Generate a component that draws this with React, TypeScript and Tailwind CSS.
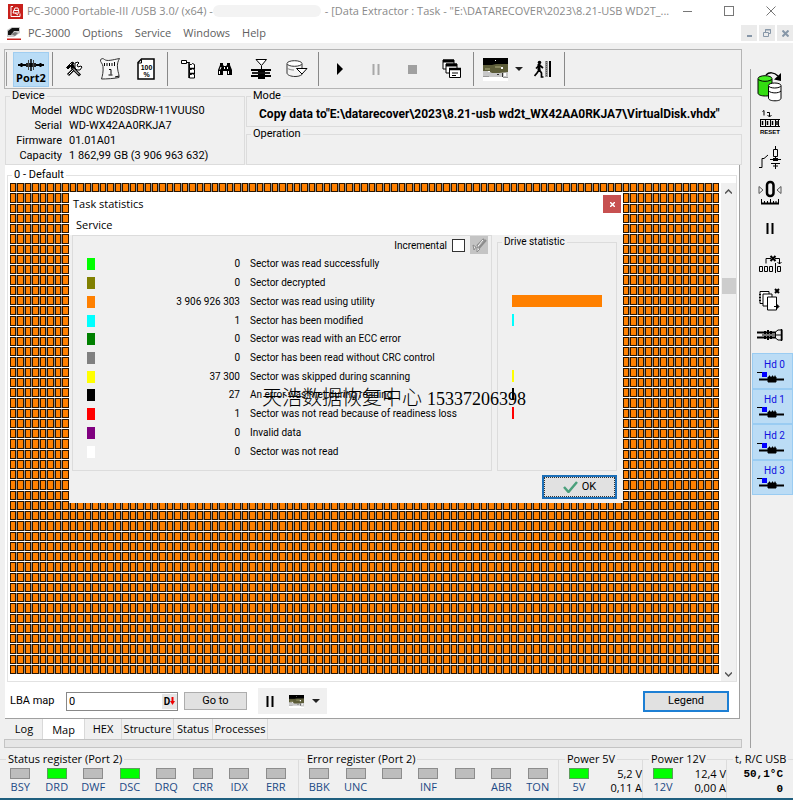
import { useState } from 'react';
import type { ReactNode } from 'react';
import clsx from 'clsx';

const UI = 'font-["Roboto","Liberation_Sans",sans-serif]';
const SEGOE = 'font-["Open_Sans","Noto_Sans",sans-serif]';

const MAP_ROWS = 48;
const MAP_COLS = 95;

interface Stat {
  color: string;
  count: string;
  label: string;
  bar: string;
}

const stats: Stat[] = [
  { color: 'bg-[#00ff00]', count: '0', label: 'Sector was read successfully', bar: 'w-0' },
  { color: 'bg-[#808000]', count: '0', label: 'Sector decrypted', bar: 'w-0' },
  { color: 'bg-[#ff8000]', count: '3 906 926 303', label: 'Sector was read using utility', bar: 'w-[90px]' },
  { color: 'bg-[#00ffff]', count: '1', label: 'Sector has been modified', bar: 'w-0.5' },
  { color: 'bg-[#008000]', count: '0', label: 'Sector was read with an ECC error', bar: 'w-0' },
  { color: 'bg-[#808080]', count: '0', label: 'Sector has been read without CRC control', bar: 'w-0' },
  { color: 'bg-[#ffff00]', count: '37 300', label: 'Sector was skipped during scanning', bar: 'w-0.5' },
  { color: 'bg-[#000000]', count: '27', label: 'An error was met during reading', bar: 'w-0.5' },
  { color: 'bg-[#ff0000]', count: '1', label: 'Sector was not read because of readiness loss', bar: 'w-0.5' },
  { color: 'bg-[#800080]', count: '0', label: 'Invalid data', bar: 'w-0' },
  { color: 'bg-[#ffffff]', count: '0', label: 'Sector was not read', bar: 'w-0' },
];

const device = [
  ['Model', 'WDC WD20SDRW-11VUUS0'],
  ['Serial', 'WD-WX42AA0RKJA7'],
  ['Firmware', '01.01A01'],
  ['Capacity', '1 862,99 GB (3 906 963 632)'],
];

const statusBits = ['BSY', 'DRD', 'DWF', 'DSC', 'DRQ', 'CRR', 'IDX', 'ERR'];
const errorBits = ['BBK', 'UNC', '', 'INF', '', 'ABR', 'TON'];
const tabs = [
  { name: 'Log', width: 'w-[37px]' },
  { name: 'Map', width: 'w-[42px]' },
  { name: 'HEX', width: 'w-[37px]' },
  { name: 'Structure', width: 'w-[52px]' },
  { name: 'Status', width: 'w-[39px]' },
  { name: 'Processes', width: 'w-[55px]' },
];

function Svg({ w = 28, h = 28, children }: { w?: number; h?: number; children: ReactNode }) {
  return (
    <svg width={w} height={h} viewBox={`0 0 ${w} ${h}`} fill="none" stroke="#000" strokeWidth="1" className="shrink-0">
      {children}
    </svg>
  );
}

/* ---------- toolbar icons ---------- */

function PortIcon() {
  return (
    <Svg w={28} h={12}>
      <path d="M1 6h26" strokeWidth="2" />
      <path d="M4.500 4v4M23.500 4v4" strokeWidth="2" />
      <path d="M9 4h10v4H9z" fill="#222" stroke="none" />
      <path d="M11.500 1v10M16.500 1v10" stroke="#444" />
      <path d="M14 0v12" strokeWidth="1.500" />
    </Svg>
  );
}

function ToolsIcon() {
  return (
    <Svg w={18} h={18}>
      <path d="M3 15L11 7" strokeWidth="3" />
      <path d="M3.500 14.500L10.500 7.500" stroke="#fff" />
      <path d="M10 3l3-1 1 1-2 2 1 2 3-1 1 1-2 3-3 0-2-2z" fill="#fff" />
      <path d="M6.500 7l8.500 8.500" strokeWidth="3" />
      <path d="M8 8.500l6 6" stroke="#fff" />
      <path d="M1.500 7.500L7 2l2 1-1 1.500 1 1.500-2 2-1.500-1.500L3 9z" fill="#000" />
      <path d="M5 5l1.500-1.500" stroke="#fff" />
    </Svg>
  );
}

function ScriptIcon() {
  return (
    <Svg w={22} h={24}>
      <path d="M1.500 3C2 1.500 4 1 5.500 2.500 8 4.500 13 3 20.500 1.500 19 4 18 7 18.500 11c.5 5 2 7 1.500 9.500C16 21.500 7 22 2.500 22 3.500 19 4.500 14 4 9.500 3.500 6 1 5 1.500 3z" fill="#f6f6f6" stroke="#333" />
      <path d="M5.500 6v3M8 6v3M10.500 6v3M13 6v3M15.500 5v4M10 12.500h2v5M9.500 18h4" />
      <path d="M16 20l4-1" />
    </Svg>
  );
}

function PercentDocIcon() {
  return (
    <Svg w={18} h={22}>
      <path d="M4.500 1H17V21H1V4.500z" fill="#fff" strokeWidth="1.500" />
      <path d="M4.500 1.500V5H1" />
      <g fill="#000" stroke="none" fontFamily="Liberation Sans" fontWeight="700" textAnchor="middle">
        <text x="9.500" y="11.500" fontSize="7">100</text>
        <text x="9.500" y="18.500" fontSize="7">%</text>
      </g>
    </Svg>
  );
}

function TreeIcon() {
  return (
    <Svg w={18} h={20}>
      <path d="M1.500 1.500h5v3h-5z" fill="#fff" />
      <path d="M6.500 3.500h3" />
      <path d="M9.500 5.500h2l1-1 2 1v4h-5zM9.500 10.500h2l1-1 2 1v4h-5zM9.500 15.500h2l1-1 2 1v3.500h-5z" fill="#fff" />
      <path d="M9 3v16" strokeWidth="1.500" />
      <path d="M10 9.500h5M10 14.500h5" strokeWidth="1.500" />
    </Svg>
  );
}

function BinocularsIcon() {
  return (
    <Svg w={16} h={14}>
      <path d="M3 1h3v2l1 1h2l1-1V1h3v2l2 5v5h-5V9H6v4H1V8l2-5z" fill="#000" stroke="none" />
      <path d="M2.500 9v3M4 5L3 7.500M10.500 5v2M11.500 9v3" stroke="#fff" />
      <path d="M7.500 5v2" stroke="#fff" />
    </Svg>
  );
}

function LayersIcon() {
  return (
    <Svg w={22} h={20}>
      <path d="M6 .5h10.500L11.500 6.500z" fill="#fff" />
      <path d="M11.500 7v12" />
      <path d="M1 11h20M1 17h20" strokeWidth="2" />
      <path d="M2 14h18" strokeWidth="2" stroke="#222" />
      <path d="M8 12.500h7M8 15.500h7M8 19h7" strokeWidth="2" />
    </Svg>
  );
}

function DiskIcon() {
  return (
    <Svg w={22} h={18}>
      <path d="M1 4v9c0 2 4 3.500 8 3.500 3 0 5-.5 7-2V4" fill="#f4f4f4" stroke="#333" />
      <ellipse cx="8.500" cy="3.500" rx="7.500" ry="2.800" fill="#fff" stroke="#333" />
      <path d="M1 8c2 1.500 4 2 7 2" stroke="#888" />
      <path d="M10.500 8.500h10.500L16 14z" fill="#fff" />
    </Svg>
  );
}

function WindowsIcon() {
  return (
    <Svg w={20} h={20}>
      <path d="M1 1h11v9H1z" fill="#fff" />
      <path d="M1 2h11" strokeWidth="3" />
      <path d="M4 5h11v9H4z" fill="#fff" />
      <path d="M4 6h11" strokeWidth="3" />
      <path d="M7.500 9.500h11v9h-11z" fill="#fff" />
      <path d="M7 10h12" strokeWidth="2.500" />
      <path d="M10 14h6M10 16.500h4" />
    </Svg>
  );
}

function PhotoIcon({ w, h }: { w: number; h: number }) {
  return (
    <svg width={w} height={h} viewBox="0 0 25 23" preserveAspectRatio="none" className="shrink-0">
      <path fill="#fff" d="M0 0h25v23H0z" />
      <path fill="#c8c8c8" d="M0 12h25v7H0z" />
      <path fill="#000" d="M0 0h25v7H0z" />
      <path fill="#5c5c38" d="M0 7h9l4-1h12v8l-9 1-7 0-4-2H0z" />
      <path fill="#85855c" d="M12 8h6v2h-6zM2 10h5v2H2z" />
      <path fill="#fff" d="M12 2h1v1h-1zM18 9h2v2h-2zM5 13h2v1H5zM21 15h2v3h-2z" />
      <path fill="#333" d="M14 16h2v1h-2zM19 15h1v4h-1z" />
      <path fill="#999" d="M20 19h5v1h-5zM0 18h6v1H0z" />
    </svg>
  );
}

function ExitIcon() {
  return (
    <Svg w={18} h={18}>
      <path d="M11 1h3v16h-3z" fill="#999" stroke="none" />
      <path d="M15 1h2v16h-2z" fill="#000" stroke="none" />
      <path d="M12.500 1v16" stroke="#555" strokeDasharray="1 1" />
      <circle cx="5.500" cy="2.500" r="1.800" fill="#000" stroke="none" />
      <path d="M5 4v6" strokeWidth="3" />
      <path d="M5 5.500L2 8.500M6 5.500L9 8M5 10l-2 3-2.500 3M5.500 10l2 3v4h2" strokeWidth="1.700" />
    </Svg>
  );
}

/* ---------- side bar icons ---------- */

function CopyDiskIcon() {
  return (
    <Svg w={26} h={30}>
      <path d="M1 7v14c0 2 3.500 3 7.500 3S15 23 15 21V7" fill="#33dd11" />
      <ellipse cx="8" cy="6.500" rx="7" ry="2.800" fill="#44ee22" />
      <path d="M11.500 14v12c0 2 3 2.800 6.500 2.800s6-.8 6-2.800V14" fill="#fff" />
      <ellipse cx="17.700" cy="13.500" rx="6.300" ry="2.500" fill="#fff" />
      <path d="M11.500 19c3 2.500 10 2.500 12.500 0" />
      <path d="M9 3c3-3 8-3 12 1" strokeWidth="1.500" />
      <path d="M24 1v8l-7-1.500z" fill="#000" stroke="none" />
    </Svg>
  );
}

function ResetIcon() {
  return (
    <Svg w={22} h={26}>
      <path d="M3.500 2.500L5 1.500v5M8 3.500h2.500v4M8.500 6l2 2 2-2" />
      <path d="M1 10.500h20M1 17.500h20M1.500 10v8M6.500 10v8M11.500 10v8M16.500 10v8M19.500 10v8" />
      <path d="M3.500 12v4M8.500 12v4M13.500 12v4M18 12v4" strokeWidth="1.500" />
      <text x="11" y="25" textAnchor="middle" fontSize="6" fontWeight="700" fill="#000" stroke="none" fontFamily="Liberation Sans">
        RESET
      </text>
    </Svg>
  );
}

function PowerIcon() {
  return (
    <Svg w={22} h={24}>
      <path d="M0 21.500h3V12.500H5L9 9" />
      <path d="M16.500 0v3M14.500 3.500h4v7h-4zM16.500 11v4M11 13.500h11" />
      <path d="M14 13.500h5" strokeWidth="3" />
      <path d="M12 17.500h9M14 20h5M16.500 17v6" />
    </Svg>
  );
}

function ZeroIcon() {
  return (
    <Svg w={24} h={26}>
      <path d="M1 6.500v7l4-3.500zM23 6.500v7L19 10z" stroke="#555" />
      <rect x="9" y="2" width="6.500" height="14" rx="3" strokeWidth="2.500" />
      <path d="M3 23.500h18" strokeWidth="2" />
      <path d="M3.500 19v4M6.500 21v2M9.500 21v2M12.500 19v4M15.500 21v2M18 21v2M20.500 19v4" />
    </Svg>
  );
}

function PauseIcon({ color }: { color: string }) {
  return (
    <Svg w={8} h={11}>
      <path d="M1.500 0v11M6.500 0v11" strokeWidth="2" stroke={color} />
    </Svg>
  );
}

function SectorsIcon() {
  return (
    <Svg w={24} h={18}>
      <path d="M1.500 11.500h3v5h-3zM6.500 11.500h3v5h-3zM11.500 11.500h3v5h-3zM19.500 11.500h3v5h-3zM17.500 8v10" />
      <path d="M8 8.500V3.500h5M17 3.500h4.500V9M19.500 7l2 2 2-2" />
      <path d="M12.500 1l5 5M17.500 1l-5 5" strokeWidth="2" />
    </Svg>
  );
}

function PagesIcon() {
  return (
    <Svg w={24} h={24}>
      <path d="M2 3.500h9v12H2z" fill="#fff" />
      <path d="M5 6h9v12H5z" fill="#fff" />
      <path d="M9.500 9h9v13h-9z" fill="#fff" />
      <path d="M1 6.500h2M1 9.500h2M1 12.500h2" />
      <path d="M17 1l4 4M21 1l-4 4" strokeWidth="2" />
      <path d="M16 18.500h4M19 16.500l2 2-2 2z" fill="#000" />
    </Svg>
  );
}

function ConnectorIcon() {
  return (
    <Svg w={26} h={14}>
      <path d="M0 4.500h19M0 9.500h19" strokeWidth="2" />
      <path d="M8 3v3M11 2v4M14 3v3M8 8v3M11 8v4M14 8v3" strokeWidth="2" />
      <path d="M5 7h14" />
      <path d="M18.500 4L21 2h4v10h-4l-2.500-2zM19 7h6" />
      <path d="M24.500 1v12" strokeWidth="1.500" />
    </Svg>
  );
}

function HeadIcon() {
  return (
    <Svg w={28} h={12}>
      <path d="M0 1.500h7" />
      <path d="M5 1h5v5H5z" fill="#0000ff" stroke="none" />
      <path d="M2 8.500h25" strokeWidth="2" />
      <path d="M11 6h8v5h-8z" fill="#000" />
      <path d="M12.500 4.500v2M15.500 4.500v2M18 4.500v2" />
    </Svg>
  );
}

const sideTools = [
  { name: 'Copy disk', icon: <CopyDiskIcon /> },
  { name: 'Reset', icon: <ResetIcon /> },
  { name: 'Power', icon: <PowerIcon /> },
  { name: 'Recalibrate', icon: <ZeroIcon /> },
  { name: 'Pause', icon: <PauseIcon color="#000" /> },
  { name: 'Sectors', icon: <SectorsIcon /> },
  { name: 'Pages', icon: <PagesIcon /> },
  { name: 'Connector', icon: <ConnectorIcon /> },
];

function ToolButton({ name, children }: { name: string; children: ReactNode }) {
  return (
    <button aria-label={name} className="flex h-9 w-9 shrink-0 items-center justify-center hover:bg-[#dcecf8]">
      {children}
    </button>
  );
}

function Separator() {
  return <div className="mx-[3px] h-[34px] w-px shrink-0 bg-[#888]" />;
}

function Caret() {
  return (
    <svg width="8" height="4" viewBox="0 0 8 4">
      <path d="M0 0h8L4 4z" fill="#222" />
    </svg>
  );
}

function Led({ name, on }: { name: string; on?: boolean }) {
  return (
    <div className="flex flex-col items-center pt-px">
      <div className={clsx('h-[11px] w-5 border', on ? 'border-[#5c9c5c] bg-[#00ff00]' : 'border-[#8c8c8c] bg-[#bdbdbd]')} />
      <span className="h-4 leading-4 text-[#1c4a85]">{name}</span>
    </div>
  );
}

function TitleBar() {
  return (
    <header className={clsx('bg-white text-[#8a8a8a]', SEGOE)}>
      <div className="flex h-[22px] items-center pr-2 pl-2 text-[11px]">
        <svg width="15" height="15" viewBox="0 0 15 15" className="mr-1 shrink-0">
          <path fill="#c8201c" d="M0 0h15v15H0z" />
          <path d="M3 2.500h2M3 2.500v10h9v-3M5 9l2-5 3 0 1 5zM5.500 6.500h5M7 9l3 2" fill="none" stroke="#fff" />
        </svg>
        <h1 className="flex min-w-0 flex-1 items-center whitespace-nowrap">
          PC-3000 Portable-III /USB 3.0/ (x64) -
          <span className="mr-1 h-3 w-[108px] rounded-full bg-[#f3f3f3]" />
          <span>- [Data Extractor : Task - "E:\DATARECOVER\2023\8.21-USB WD2T_...</span>
        </h1>
        <div className="flex shrink-0 items-center">
          <button aria-label="Minimize" className="flex h-5 w-7 items-center justify-center">
            <span className="h-px w-[9px] bg-[#777]" />
          </button>
          <button aria-label="Maximize" className="flex h-5 w-14 items-center justify-center">
            <span className="h-[10px] w-[10px] border border-[#777]" />
          </button>
          <button aria-label="Close" className="flex h-5 w-7 items-center justify-center">
            <svg width="10" height="10" viewBox="0 0 10 10">
              <path d="M.5.5l9 9M9.500.5l-9 9" stroke="#777" />
            </svg>
          </button>
        </div>
      </div>
      <div className="flex h-[21px] items-center pt-px pl-[7px]">
        <svg width="14" height="13" viewBox="0 0 14 13" className="mr-[7px] shrink-0">
          <path fill="#ccc" d="M0 3l5-3h8v6l-6 4H0z" />
          <path fill="#111" d="M1 4l4-3h7v3l-5 0-3 4H1z" />
          <path fill="#777" d="M4 7l4-2 3 1-3 3z" />
          <path fill="#c8201c" d="M0 11.500h14V13H0z" />
        </svg>
        <nav className="flex flex-1 gap-3 text-[11px] text-[#606060]">
          <a href="#pc3000">PC-3000</a>
          <a href="#options">Options</a>
          <a href="#service">Service</a>
          <a href="#windows">Windows</a>
          <a href="#help">Help</a>
        </nav>
        <div className="flex gap-0.5">
          <button aria-label="Minimize task" className="flex h-4 w-4 items-end justify-center bg-[#ebebeb] pb-1">
            <span className="h-0.5 w-[5px] bg-[#8797a8]" />
          </button>
          <button aria-label="Restore task" className="flex h-4 w-4 items-center justify-center bg-[#ebebeb]">
            <svg width="8" height="8" viewBox="0 0 8 8" fill="none" stroke="#8797a8">
              <path d="M.5 3.500h5v4h-5zM2.500 3V.5h5v4H6M2 1h6" />
            </svg>
          </button>
          <button aria-label="Close task" className="flex h-4 w-4 items-center justify-center bg-[#ebebeb]">
            <svg width="7" height="7" viewBox="0 0 7 7" stroke="#8797a8" strokeWidth="2">
              <path d="M.5.5l6 6M6.500.5l-6 6" />
            </svg>
          </button>
        </div>
      </div>
    </header>
  );
}

function Toolbar() {
  return (
    <div className="flex h-10 shrink-0 items-center border border-[#b4b4b4] pl-px">
      <div className="mr-1.5 h-[34px] w-px bg-[#999]" />
      <button className={clsx('flex h-[35px] w-9 shrink-0 flex-col items-center border border-[#a0cdf0] bg-[#b9dcf6] pt-1.5 text-[11px] leading-[14px] font-bold', SEGOE)}>
        <PortIcon />
        Port2
      </button>
      <Separator />
      <ToolButton name="Settings"><ToolsIcon /></ToolButton>
      <ToolButton name="Script"><ScriptIcon /></ToolButton>
      <ToolButton name="Report"><PercentDocIcon /></ToolButton>
      <Separator />
      <ToolButton name="Tree"><TreeIcon /></ToolButton>
      <ToolButton name="Find"><BinocularsIcon /></ToolButton>
      <ToolButton name="Layers"><LayersIcon /></ToolButton>
      <ToolButton name="Disk"><DiskIcon /></ToolButton>
      <Separator />
      <ToolButton name="Start">
        <svg width="6" height="12" viewBox="0 0 6 12"><path d="M0 0l6 6-6 6z" /></svg>
      </ToolButton>
      <ToolButton name="Pause"><PauseIcon color="#a8a8a8" /></ToolButton>
      <ToolButton name="Stop"><span className="h-[9px] w-[9px] bg-[#a0a0a0]" /></ToolButton>
      <div className="w-1" />
      <ToolButton name="Windows"><WindowsIcon /></ToolButton>
      <Separator />
      <ToolButton name="View"><PhotoIcon w={25} h={23} /></ToolButton>
      <button aria-label="View options" className="flex h-9 w-3 items-center justify-center"><Caret /></button>
      <ToolButton name="Exit"><ExitIcon /></ToolButton>
      <Separator />
    </div>
  );
}

function DeviceInfo() {
  return (
    <div className="flex shrink-0 gap-px pl-px">
      <fieldset className="h-[76px] w-[240px] shrink-0 border border-[#dcdcdc]">
        <legend className="ml-1 px-0.5 leading-[14px]">Device</legend>
        <dl className="grid grid-cols-[56px_1fr] gap-x-[7px] leading-[15px] whitespace-nowrap">
          {device.map(([name, value]) => (
            <div key={name} className="contents">
              <dt className="text-right">{name}</dt>
              <dd>{value}</dd>
            </div>
          ))}
        </dl>
      </fieldset>
      <div className="min-w-0 flex-1">
        <fieldset className="h-[38px] border border-[#dcdcdc]">
          <legend className="ml-1 px-0.5 leading-[14px]">Mode</legend>
          <p className="pl-3 text-[12px] leading-[22px] font-bold whitespace-nowrap">
            Copy data to"E:\datarecover\2023\8.21-usb wd2t_WX42AA0RKJA7\VirtualDisk.vhdx"
          </p>
        </fieldset>
        <fieldset className="h-[38px] border border-[#dcdcdc]">
          <legend className="ml-1 px-0.5 leading-[14px]">Operation</legend>
        </fieldset>
      </div>
    </div>
  );
}

function SectorMap() {
  return (
    <div className="grid min-w-0 flex-1 grid-rows-[repeat(48,minmax(0,1fr))] gap-y-px bg-white">
      {Array.from({ length: MAP_ROWS }, (_, row) => (
        <div key={row} className="grid grid-cols-[repeat(95,minmax(0,1fr))] gap-x-px bg-[#909090]">
          {Array.from({ length: MAP_COLS }, (_, col) => (
            <div key={col} className="border border-[#2a1500] bg-[#ff8000]" />
          ))}
        </div>
      ))}
    </div>
  );
}

function TaskStatistics() {
  const [incremental, setIncremental] = useState(false);

  return (
    <section className="absolute top-7 left-16 w-[554px] bg-[#f0f0f0]">
      <div className={clsx('bg-white text-[11px]', SEGOE)}>
        <div className="flex h-[22px] items-center justify-between pr-0.5 pl-1">
          <h2>Task statistics</h2>
          <button aria-label="Close" className="flex h-[18px] w-[18px] items-center justify-center bg-[#c75050]">
            <svg width="5" height="5" viewBox="0 0 5 5" stroke="#fff" strokeWidth="1.500">
              <path d="M0 0l5 5M5 0L0 5" />
            </svg>
          </button>
        </div>
        <a href="#task-service" className="flex h-5 items-center pl-[7px]">Service</a>
      </div>
      <div className="flex gap-[5px] px-[3px] text-[10px]">
        <div className="h-[236px] w-[420px] border border-[#dcdcdc]">
          <div className="flex h-[18px] items-center justify-end gap-[5px] pr-[3px]">
            <label htmlFor="incremental">Incremental</label>
            <input
              id="incremental"
              type="checkbox"
              checked={incremental}
              onChange={(e) => setIncremental(e.target.checked)}
              className="h-[13px] w-[13px] appearance-none border border-[#333] bg-white checked:bg-[#0078d7]"
            />
            <button aria-label="Clear statistics" className="flex h-[18px] w-[18px] items-center justify-center bg-[#c4c4c4]">
              <svg width="16" height="16" viewBox="0 0 16 16" fill="none" stroke="#8c8c8c">
                <path d="M13 2L6 9M15 3L8 11" strokeWidth="2" />
                <path d="M2 8l3 2-2 3zM6 10l3 2-3 3z" fill="#eee" />
                <path d="M12 3l-5 6" stroke="#fff" />
              </svg>
            </button>
          </div>
          <table className="mt-px h-[206px] w-full">
            <tbody>
              {stats.map((s) => (
                <tr key={s.label}>
                  <td className="w-[30px] pl-3.5">
                    <div className={clsx('h-3 w-2', s.color)} />
                  </td>
                  <td className="w-[137px] text-right leading-4">{s.count}</td>
                  <td className="pl-[10px] leading-4">{s.label}</td>
                </tr>
              ))}
            </tbody>
          </table>
        </div>
        <fieldset className="h-[236px] w-[120px] border border-[#dcdcdc]">
          <legend className="ml-1 px-0.5 leading-[14px]">Drive statistic</legend>
          <div className="mt-[5px] grid h-[206px] grid-rows-11 items-center pl-3.5">
            {stats.map((s) => (
              <div key={s.label} className={clsx('h-3', s.bar, s.color)} />
            ))}
          </div>
        </fieldset>
      </div>
      <div className="flex justify-end pt-1 pr-1.5 pb-1">
        <button className="flex h-6 w-[75px] items-center justify-center gap-1 border-2 border-[#1d70b8] bg-[#e1e1e1] outline-1 -outline-offset-3 outline-dotted outline-[#333]">
          <svg width="15" height="12" viewBox="0 0 15 12">
            <path d="M1 6l4.500 5L14 1" fill="none" stroke="#4ba07c" strokeWidth="2.500" />
          </svg>
          OK
        </button>
      </div>
      <p
        lang="zh-CN"
        className="absolute top-[193px] left-[193px] font-['Liberation_Serif','Noto_Sans_CJK_SC',serif] text-[18px] leading-6 font-light whitespace-nowrap"
      >
        <span className="text-[20px]">天浩数据恢复中心 </span>15337206398
      </p>
    </section>
  );
}

function MapPanel() {
  const [lba, setLba] = useState('0');

  return (
    <main className="relative flex min-h-0 flex-1 flex-col border-r border-b border-[#a0a0a0] bg-white">
      <fieldset className="mx-0.5 mt-0.5 flex min-h-0 flex-1 flex-col border border-[#e2e2e2]">
        <legend className="ml-1 px-0.5 leading-4">0 - Default</legend>
        <div className="flex min-h-0 flex-1 pl-0.5">
          <div className="flex min-w-0 flex-1 pb-[7px]">
            <SectorMap />
          </div>
          <div className="ml-0.5 flex w-[15px] flex-col items-center bg-[#f0f0f0] py-1">
            <svg width="7" height="5" viewBox="0 0 7 5" fill="none" stroke="#555" strokeWidth="1.500" className="mt-0.5">
              <path d="M0 4.500l3.500-3.500 3.500 3.500" />
            </svg>
            <div className="mt-[84px] h-4 w-[14px] bg-[#cdcdcd]" />
            <svg width="7" height="5" viewBox="0 0 7 5" fill="none" stroke="#555" strokeWidth="1.500" className="mt-auto">
              <path d="M0 .5l3.500 3.500L7 .5" />
            </svg>
          </div>
        </div>
      </fieldset>
      <div className="flex h-9 shrink-0 items-center pt-0.5 pr-2.5 pl-[5px]">
        <label htmlFor="lba" className="w-14">LBA map</label>
        <div className="flex h-[19px] w-28 items-center border border-[#888] bg-white">
          <input
            id="lba"
            value={lba}
            onChange={(e) => setLba(e.target.value)}
            className="h-full w-[95px] pl-0.5 outline-none"
          />
          <button aria-label="Decimal" className="flex h-[15px] w-[15px] items-center justify-center bg-[#e6e6e6] text-[10px] font-bold">
            D
            <svg width="5" height="8" viewBox="0 0 5 8"><path d="M1.500 0h2v4H5L2.500 8 0 4h1.500z" fill="#e00" /></svg>
          </button>
        </div>
        <button className="ml-1.5 h-[18px] w-[63px] border border-[#adadad] bg-[#e1e1e1]">Go to</button>
        <div className="ml-[11px] flex h-[26px] w-[69px] items-center bg-[#f0f0f0] pl-2">
          <button aria-label="Pause map"><PauseIcon color="#000" /></button>
          <button aria-label="Map view" className="ml-[15px] flex items-center gap-2">
            <PhotoIcon w={15} h={13} />
            <Caret />
          </button>
        </div>
        <button className="ml-auto h-[21px] w-[86px] border-2 border-[#1d7fd4] bg-[#e1e1e1]">Legend</button>
      </div>
      <TaskStatistics />
    </main>
  );
}

export default function App() {
  const [tab, setTab] = useState('Map');

  return (
    <div className={clsx('flex h-screen flex-col overflow-hidden bg-[#f0f0f0] text-[11px] text-black', UI)}>
      <TitleBar />
      <div className="flex min-h-0 flex-1">
        <div className="flex min-w-0 flex-1 flex-col pt-1.5 pr-2 pl-1">
          <Toolbar />
          <DeviceInfo />
          <div className="flex min-h-0 flex-1 flex-col pr-0.5 pl-px">
            <MapPanel />
          </div>
          <div role="tablist" className={clsx('flex h-5 shrink-0 pl-0.5', SEGOE)}>
            {tabs.map((t) => (
              <button
                key={t.name}
                role="tab"
                aria-selected={tab === t.name}
                onClick={() => setTab(t.name)}
                className={clsx(
                  'flex shrink-0 justify-center border-r border-[#d9d9d9] leading-5 whitespace-nowrap',
                  t.width,
                  tab === t.name && 'bg-white pt-px'
                )}
              >
                {t.name}
              </button>
            ))}
          </div>
          <div className="h-[9px] shrink-0 border border-[#c4c4c4] bg-[#e6e6e6]" />
        </div>
        <aside className="mt-[26px] w-[43px] shrink-0 border-l border-[#a0a0a0] pl-px">
          <div className="grid h-[426px] grid-rows-12">
            {sideTools.map((t) => (
              <button key={t.name} aria-label={t.name} className="flex items-center justify-center pr-1.5">
                {t.icon}
              </button>
            ))}
            {[0, 1, 2, 3].map((n) => (
              <button
                key={n}
                className="flex flex-col items-center justify-center border border-[#9accf2] bg-[#bbdcf5] pr-1 text-[10px] leading-3 text-[#1010e0]"
              >
                <span className="pl-2">Hd {n}</span>
                <HeadIcon />
              </button>
            ))}
          </div>
        </aside>
      </div>
      <footer className={clsx('grid h-[50px] shrink-0 grid-cols-[299fr_260fr_84fr_84fr_66fr] pt-[3px] whitespace-nowrap', SEGOE)}>
        <fieldset className="min-w-0 border-t border-r border-[#dcdcdc]">
          <legend className="ml-1.5 px-0.5 leading-4">Status register (Port 2)</legend>
          <div className="grid grid-cols-8 pr-1 pl-0.5">
            {statusBits.map((b) => (
              <Led key={b} name={b} on={b === 'DRD' || b === 'DSC'} />
            ))}
          </div>
        </fieldset>
        <fieldset className="min-w-0 border-t border-r border-[#dcdcdc]">
          <legend className="ml-1.5 px-0.5 leading-4">Error register (Port 2)</legend>
          <div className="grid grid-cols-7 pr-0.5 pl-0.5">
            {errorBits.map((b, i) => (
              <Led key={i} name={b} />
            ))}
          </div>
        </fieldset>
        {[
          { volt: '5V', v: '5,2 V', a: '0,11 A' },
          { volt: '12V', v: '12,4 V', a: '0,00 A' },
        ].map((p) => (
          <fieldset key={p.volt} className="min-w-0 border-t border-r border-[#dcdcdc]">
            <legend className="ml-1.5 px-0.5 leading-4">Power {p.volt}</legend>
            <div className="flex justify-between pl-2.5">
              <Led name={p.volt} on />
              <div className="text-right leading-[14px]">
                <p>{p.v}</p>
                <p>{p.a}</p>
              </div>
            </div>
          </fieldset>
        ))}
        <fieldset className="min-w-0 border-t border-[#dcdcdc] pr-2.5">
          <legend className="ml-1.5 px-0.5 leading-4">t, R/C USB</legend>
          <div className="text-right font-['Liberation_Mono',monospace] leading-[15px] font-bold">
            <p>50,1°C</p>
            <p>0</p>
          </div>
        </fieldset>
      </footer>
      <div className="h-0.5 shrink-0 bg-[#1f5f7f]" />
    </div>
  );
}
